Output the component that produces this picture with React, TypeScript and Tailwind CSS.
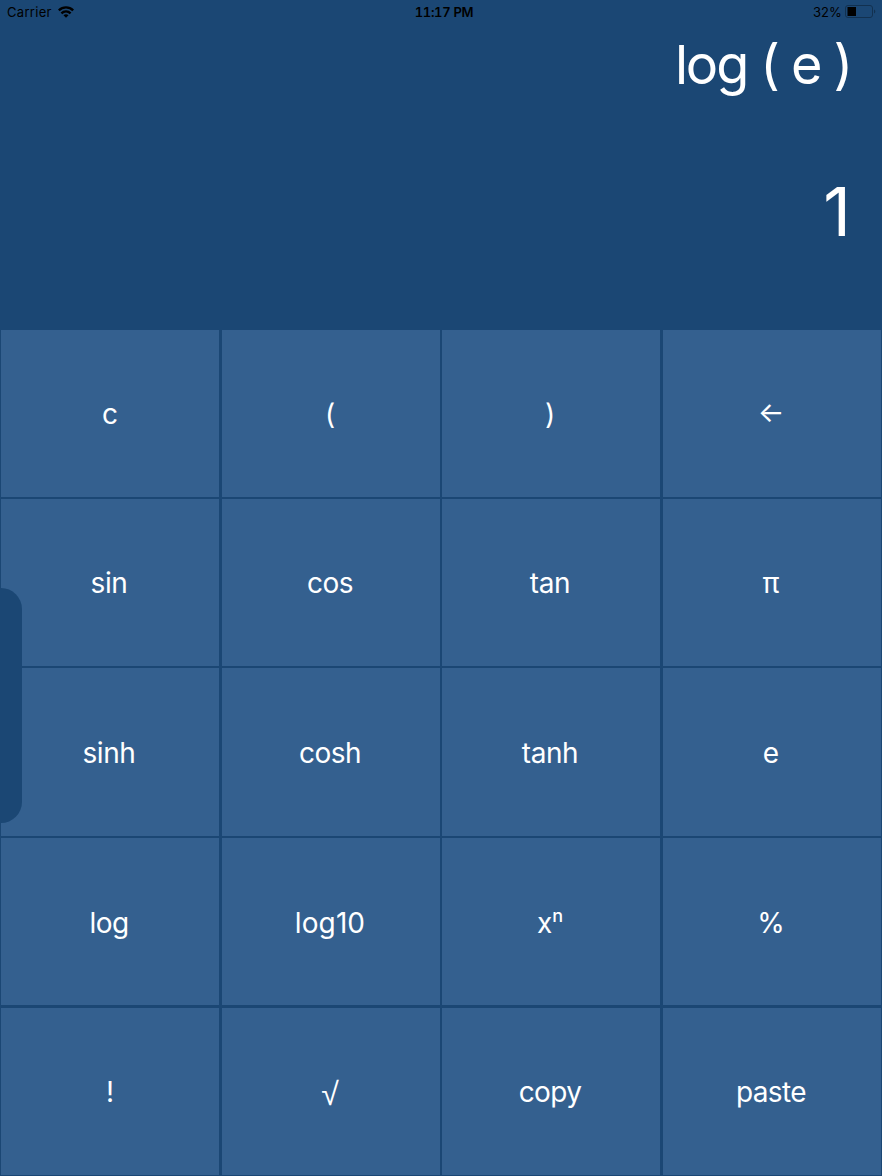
import type { ReactNode } from 'react';

const keys: { id: string; face?: ReactNode; style?: string }[] = [
  { id: 'c', style: 'translate-x-px' },
  { id: '(' },
  { id: ')' },
  { id: '←', style: '-translate-y-[2px]' },
  { id: 'sin', style: 'tracking-[-0.4px]' },
  { id: 'cos', style: 'tracking-[-0.6px]' },
  { id: 'tan', style: 'tracking-[-0.4px]' },
  { id: 'π' },
  { id: 'sinh', style: 'tracking-[-0.4px]' },
  { id: 'cosh', style: 'tracking-[-0.5px]' },
  { id: 'tanh', style: 'tracking-[-0.4px]' },
  { id: 'e' },
  { id: 'log', style: 'translate-y-px tracking-[-0.6px]' },
  { id: 'log10', style: 'translate-y-px tracking-[0.1px]' },
  {
    id: 'power',
    style: 'translate-y-px',
    face: (
      <>
        x<span className="relative -top-[11px] text-[18px] font-medium">n</span>
      </>
    ),
  },
  { id: '%', style: 'translate-y-px' },
  { id: '!', style: 'translate-x-px' },
  { id: '√', style: "translate-y-[2px] font-['Liberation_Sans',sans-serif] text-[32px]" },
  { id: 'copy', style: 'tracking-[-0.6px]' },
  { id: 'paste', style: 'tracking-[-0.6px]' },
];

function WifiIcon() {
  return (
    <svg className="-ml-px" width="16" height="12" viewBox="0 0 16 12" fill="none" stroke="#000" strokeWidth="2.4">
      <path d="M0.8 4.4C4.9 0.4 11.1 0.4 15.2 4.4" />
      <path d="M3.4 7.3C6.1 4.8 9.9 4.8 12.6 7.3" />
      <path d="M8 11.8L5.5 9.3C6.9 8 9.1 8 10.5 9.3Z" fill="#000" stroke="none" />
    </svg>
  );
}

function BatteryIcon() {
  return (
    <svg width="31" height="14" viewBox="0 0 31 14" fill="none">
      <rect x="0.5" y="0.5" width="27" height="12" rx="2.5" stroke="#123150" />
      <rect x="2.5" y="2" width="8.5" height="9" fill="#000" />
      <path d="M29 4.5C30.8 5.2 30.8 7.8 29 8.5Z" fill="#123150" />
    </svg>
  );
}

export default function App() {
  return (
    <div className="relative flex h-[1176px] w-[882px] flex-col overflow-hidden bg-[#1b4774] font-['Inter',sans-serif]">
      <header className="grid h-6 grid-cols-3 items-center pr-[6px] pl-[7px] text-[13px] leading-none text-black">
        <div className="flex items-center gap-[7px] tracking-[0.3px]">
          Carrier
          <WifiIcon />
        </div>
        <div className="pl-[5px] text-center font-semibold tracking-[-0.3px] tabular-nums">11:17 PM</div>
        <div className="flex items-center justify-end gap-[3px] tracking-[0.1px]">
          32%
          <BatteryIcon />
        </div>
      </header>
      <section className="flex h-[306px] flex-col items-end pr-[31px] text-white">
        <div className="pt-[9px] text-[54px] leading-[64px] tracking-[-2.1px]">log ( e )</div>
        <div className="pt-[74px] text-[68px] leading-[80px]">1</div>
      </section>
      <main className="grid grid-cols-[221px_220px_221px_218px] grid-rows-[169px_169px_170px_170px_167px] pl-px">
        {keys.map(({ id, face, style = '' }, index) => (
          <button
            key={id}
            className={`flex w-[218px] items-center justify-center bg-[#34608f] pt-px pr-[2px] text-[28px] leading-none text-white ${
              index >= 8 && index < 12 ? 'h-[168px]' : 'h-[167px]'
            }`}
          >
            <span className={style}>{face ?? id}</span>
          </button>
        ))}
      </main>
      <aside className="absolute top-[588px] left-0 h-[235px] w-[22px] rounded-r-[21px] bg-[#1b4774]" />
    </div>
  );
}
